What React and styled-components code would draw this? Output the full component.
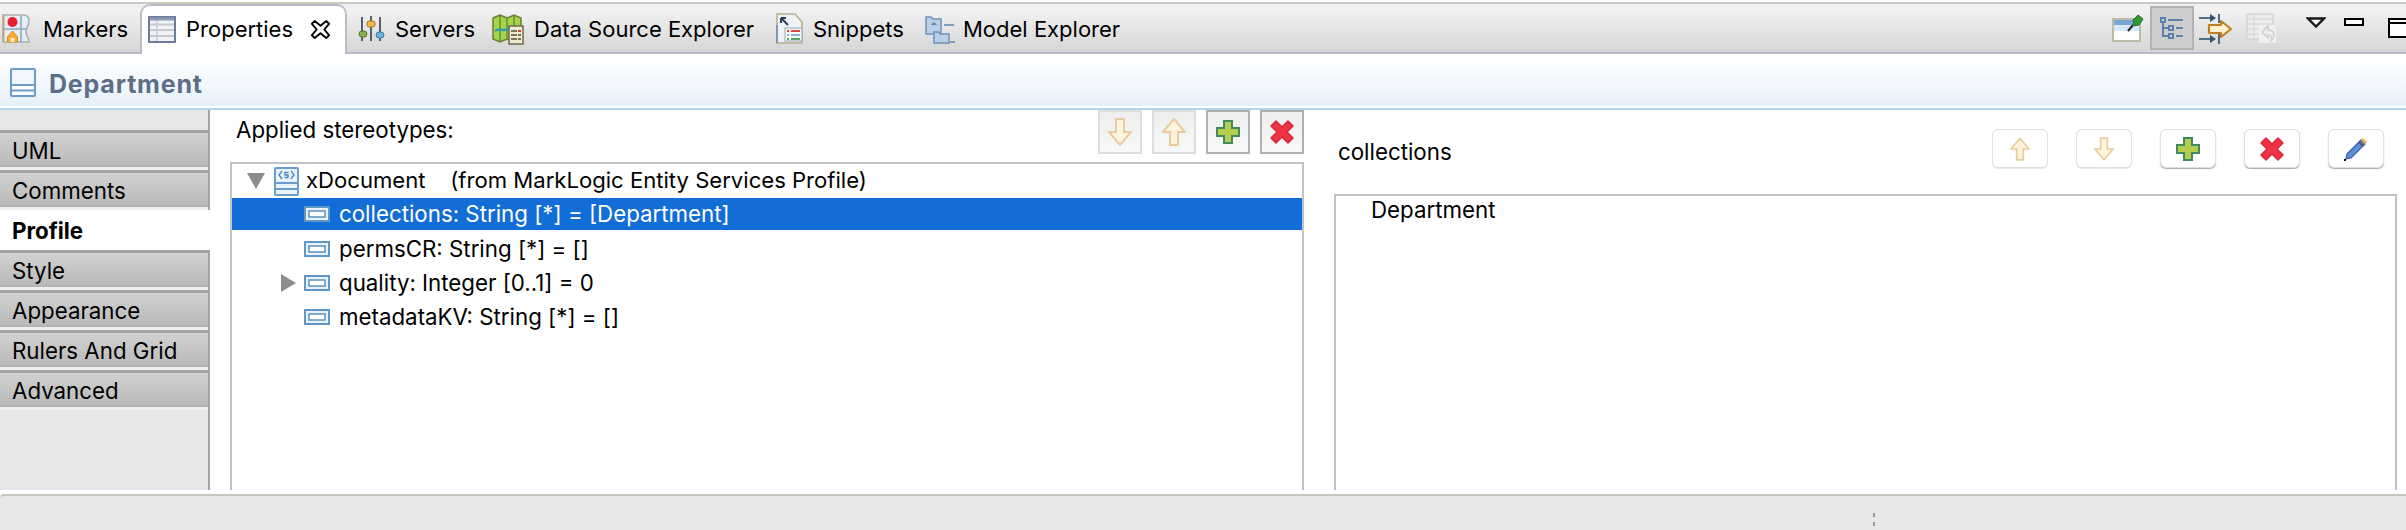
import React from 'react'
import styled, { createGlobalStyle } from 'styled-components'

const Global = createGlobalStyle`
  html, body { margin: 0; padding: 0; background: #fff; }
  body { font-family: "Inter", "Liberation Sans", sans-serif; color: #000; overflow: hidden; }
`

const Page = styled.div`
  width: 2406px;
  height: 530px;
  display: flex;
  flex-direction: column;
  overflow: hidden;
  background: #fff;
`

const TabStrip = styled.div`
  flex: none;
  height: 48px;
  margin-top: 2px;
  display: flex;
  background: linear-gradient(#f1f1f1 6px, #d6d6d6);
  border-top: 2px solid #c9c9c2;
  border-bottom: 2px solid #b9bcc9;
`

const Tab = styled.div`
  flex: none;
  width: ${p => p.$w}px;
  height: 48px;
  box-sizing: border-box;
  display: flex;
  align-items: center;
  gap: ${p => p.$gap || 10}px;
  padding: 1px 0 0 ${p => p.$pad}px;
  font-size: 22px;
  white-space: nowrap;
`

const ActiveTab = styled(Tab)`
  height: 50px;
  background: #fff;
  border: 2px solid #b9bcc9;
  border-bottom: 0;
  border-radius: 10px 10px 0 0;
  padding: 0 0 2px 6px;
  margin-bottom: -2px;
`

const CloseMark = styled.svg`
  width: 21px;
  height: 21px;
  margin-left: 7px;
  flex: none;
`

const ViewTools = styled.div`
  margin-left: auto;
  display: flex;
  align-items: center;
  height: 48px;
`

const ToolIcon = styled.span`
  flex: none;
  display: flex;
  align-items: ${p => (p.$pt ? 'flex-start' : 'center')};
  justify-content: center;
  width: ${p => p.$w}px;
  height: 44px;
  margin-left: ${p => p.$ml || 0}px;
  padding-top: ${p => p.$pt || 0}px;
  box-sizing: border-box;
  background: ${p => (p.$on ? '#cdcdcd' : 'transparent')};
  border: ${p => (p.$on ? '2px solid #b3b3b3' : '0')};
`

const Header = styled.div`
  flex: none;
  height: 52px;
  box-sizing: border-box;
  display: flex;
  align-items: center;
  gap: 13px;
  padding: 5px 0 0 10px;
  background: linear-gradient(#fff 8%, #e6f0f9);
  border-bottom: 2px solid #fff;
  box-sizing: content-box;
  height: 47px;
`

const HeaderRule = styled.div`
  flex: none;
  height: 2px;
  background: #b6d3ee;
`

const HeaderTitle = styled.div`
  font-size: 25px;
  font-weight: 700;
  letter-spacing: 0.8px;
  color: #5d6f86;
  padding-top: 3px;
`

const Body = styled.div`
  flex: none;
  height: 380px;
  display: flex;
`

const Sidebar = styled.div`
  flex: none;
  width: 210px;
  box-sizing: border-box;
  padding-top: 20px;
  background: #e7e7e7;
  border-right: 2px solid #a3a3a3;
`

const SideTab = styled.div`
  height: 40px;
  box-sizing: border-box;
  display: flex;
  align-items: center;
  padding-left: 12px;
  margin-right: ${p => (p.$on ? '-2px' : '0')};
  font-size: 22.3px;
  font-weight: ${p => (p.$on ? 700 : 400)};
  background: ${p => (p.$on ? '#fff' : 'linear-gradient(#d1d1d1, #b9b9b9)')};
  border-top: ${p => (p.$on ? '0' : '3px solid #a3a3a3')};
  border-bottom: ${p => (p.$on ? '0' : '3px solid #f0f0f0')};
  box-shadow: ${p => (p.$on ? 'none' : 'inset 0 -1px 0 #b0b0b0')};
`

const LeftPane = styled.div`
  flex: none;
  width: 1094px;
  box-sizing: border-box;
  display: flex;
  flex-direction: column;
  padding-left: 20px;
`

const PaneBar = styled.div`
  flex: none;
  height: 52px;
  display: flex;
  justify-content: space-between;
`

const PaneLabel = styled.div`
  font-size: 22.3px;
  padding: 6px 0 0 6px;
`

const SquareButtons = styled.div`
  display: flex;
  gap: 10px;
`

const SquareButton = styled.div`
  width: 44px;
  height: 44px;
  box-sizing: border-box;
  display: flex;
  align-items: center;
  justify-content: center;
  background: linear-gradient(#eeeeee, #f8f8f8);
  border: 2px solid ${p => (p.$off ? '#dedede' : '#b0b0b0')};
`

const TreeBox = styled.div`
  flex: 1;
  border: 2px solid #c2c2c2;
  border-bottom: 0;
`

const TreeRow = styled.div`
  height: ${p => (p.$sel ? 32 : 34)}px;
  margin-bottom: ${p => (p.$sel ? 2 : 0)}px;
  display: flex;
  align-items: center;
  font-size: 22.3px;
  white-space: nowrap;
  background: ${p => (p.$sel ? '#126dd6' : 'transparent')};
  color: ${p => (p.$sel ? '#fff' : '#000')};
`

const RowText = styled.span`
  white-space: pre;
  margin-top: -2px;
`

const DocText = styled(RowText)`
  font-size: 22.1px;
  margin-left: -1px;
`

const Twisty = styled.div`
  flex: none;
  width: 0;
  height: 0;
  margin-left: ${p => p.$ml}px;
  border-style: solid;
  border-color: transparent;
  ${p => (p.$open
    ? 'border-width: 16px 9px 0 9px; border-top-color: #8d8d8d;'
    : 'border-width: 9px 0 9px 15px; border-left-color: #8d8d8d;')}
`

const StereotypeSlot = styled.span`
  flex: none;
  margin: 0 8px 0 9px;
`

const RowIcon = styled.svg`
  flex: none;
  width: 26px;
  height: 16px;
  margin-left: ${p => p.$ml}px;
  margin-right: 9px;
`

const RightPane = styled.div`
  flex: 1;
  min-width: 0;
  display: flex;
  flex-direction: column;
  padding: 19px 9px 0 30px;
`

const ValueBar = styled.div`
  flex: none;
  height: 65px;
  display: flex;
  justify-content: space-between;
`

const ValueLabel = styled.div`
  font-size: 22.3px;
  padding: 9px 0 0 4px;
`

const RoundButtons = styled.div`
  display: flex;
  gap: 28px;
  margin-right: 13px;
`

const RoundButton = styled.div`
  width: 56px;
  height: 39px;
  box-sizing: border-box;
  display: flex;
  align-items: center;
  justify-content: center;
  background: #fff;
  border: 1px solid #e0e0e0;
  border-radius: 6px;
  box-shadow: 0 1px 1px ${p => (p.$off ? '#e4e4e4' : '#a8a8a8')};
`

const ValueBox = styled.div`
  flex: 1;
  border: 2px solid #c2c2c2;
  border-bottom: 0;
  padding: 0 0 0 35px;
  font-size: 22.3px;
`

const BottomArea = styled.div`
  flex: 1;
  margin-top: 4px;
  background: #e7e7e7;
  border-top: 2px solid #c5c6bd;
  border-top-left-radius: 4px;
  display: flex;
  justify-content: center;
  padding: 17px 0 0 1342px;
  box-sizing: border-box;
`

const Sash = styled.div`
  width: 2px;
  height: 13px;
  background: linear-gradient(#9c9c94 4px, transparent 4px, transparent 9px, #9c9c94 9px);
`

const IconSvg = styled.svg`
  flex: none;
  display: block;
`

const Svg = ({ w, h, vb, children }) => (
  <IconSvg width={w} height={h} viewBox={vb || `0 0 ${w} ${h}`}>{children}</IconSvg>
)

const MarkersIcon = () => (
  <Svg w={28} h={29}>
    <path d="M1 1h20c5 0 6 3 6 6 0 5-3 7-3 11 0 4 3 6 3 10H1z" fill="#e6edf4" stroke="#a9afb2" strokeWidth="1.500" />
    <path d="M1.500 1.500v26" stroke="#b9a77e" strokeWidth="2" />
    <path d="M2 15h22M19 2v26" stroke="#8fa6c0" strokeWidth="1.500" />
    <circle cx="10.500" cy="8" r="5" fill="#e3202c" />
    <path d="M10.500 17l5 6v5h-10v-5z" fill="#f8ae2c" stroke="#d98e22" />
    <path d="M8.500 24h4v4h-4z" fill="#fde9b8" />
  </Svg>
)

const PropertiesIcon = () => (
  <Svg w={28} h={27}>
    <rect x="1" y="1" width="26" height="25" fill="#f2f2f4" stroke="#6d7c97" strokeWidth="2" />
    <path d="M2 8.500h24M2 14h24M2 20h24" stroke="#c4c9d2" strokeWidth="2" />
    <path d="M9 3v22" stroke="#c9ced6" strokeWidth="1.500" />
    <path d="M2 3h24" stroke="#8c99b0" strokeWidth="3" />
  </Svg>
)

const ServersIcon = () => (
  <Svg w={27} h={28}>
    <path d="M4 2v24M13 1v25M22 2v24" stroke="#55606e" strokeWidth="2" />
    <rect x="1" y="16" width="8" height="6" rx="3" fill="#86b04a" stroke="#4e7a2d" />
    <rect x="9" y="6" width="8" height="6" rx="2" fill="#efb84a" stroke="#ad7a1e" />
    <rect x="18" y="17" width="8" height="6" rx="3" fill="#6fb4dc" stroke="#3a7ca6" />
  </Svg>
)

const DataSourceIcon = () => (
  <Svg w={32} h={32}>
    <path d="M1 5l7-3 7 3 7-3 7 3v20l-7 4-7-3-7 3-7-3z" fill="#a4d64a" stroke="#707a3a" strokeWidth="1.500" />
    <path d="M8 3v25M15 5v22M22 3v25" stroke="#6c8c34" strokeWidth="1.500" />
    <path d="M3 18c5-4 9 2 15-3" stroke="#3a9aa8" strokeWidth="2.500" fill="none" />
    <rect x="17" y="13" width="14" height="18" fill="#efe9cf" stroke="#6f6a50" strokeWidth="1.500" />
    <path d="M19 18h6M19 22h6M19 26h6" stroke="#77735c" strokeWidth="2" />
    <path d="M26 18h3" stroke="#cf3a2c" strokeWidth="2" />
    <path d="M26 22h3M26 26h3" stroke="#77735c" strokeWidth="2" />
  </Svg>
)

const SnippetsIcon = () => (
  <Svg w={27} h={31}>
    <path d="M1 1h18l7 8v21H1z" fill="#eef3f8" stroke="#b8ad8c" strokeWidth="1.500" />
    <path d="M5 5l7 7M5 5h5M5 5v5" stroke="#2a3c56" strokeWidth="2" fill="none" />
    <rect x="9" y="15" width="17" height="13" fill="#f8f8f4" stroke="#9aa4b4" />
    <path d="M11 18h2M15 18h9" stroke="#d84840" strokeWidth="2" />
    <path d="M11 22h2M15 22h9" stroke="#8ab2d6" strokeWidth="2" />
    <path d="M11 26h2M15 26h9" stroke="#4ea860" strokeWidth="2" />
    <path d="M1 12v18" stroke="#7f96b6" strokeWidth="2" />
  </Svg>
)

const ModelIcon = () => (
  <Svg w={30} h={30}>
    <path d="M1 3h5l2 2h8v15H1z" fill="#b8cfe6" stroke="#6f92b8" strokeWidth="1.500" />
    <path d="M6 11l3-3 3 3z" fill="#5f84a8" />
    <path d="M9 18h5l1 2h9v9H9z" fill="#b8cfe6" stroke="#6f92b8" strokeWidth="1.500" />
    <path d="M19 11h10M25 28h5" stroke="#7d9cc0" strokeWidth="2" />
  </Svg>
)

const PinIcon = () => (
  <Svg w={32} h={28}>
    <rect x="1" y="5" width="27" height="22" fill="#fff" stroke="#aca88c" strokeWidth="1.500" />
    <rect x="2" y="6" width="25" height="5" fill="#7aa6d6" />
    <path d="M2 11h25v6H2z" fill="#d6e8f8" />
    <path d="M16 17l5-6" stroke="#222" strokeWidth="2" />
    <path d="M21 6l5-5 5 4-4 6-5 1z" fill="#2f9a3c" stroke="#1f6f2a" />
  </Svg>
)

const TreeModeIcon = () => (
  <Svg w={24} h={22}>
    <g fill="#cdd6e6" stroke="#5f7fae" strokeWidth="2">
      <rect x="1" y="1" width="4" height="4" />
      <rect x="9" y="9" width="4" height="4" />
      <rect x="9" y="17" width="4" height="4" />
    </g>
    <path d="M3 5v14h6M3 11h6M8 3h15M16 11h7M16 19h7" stroke="#5f7fae" strokeWidth="2" fill="none" />
  </Svg>
)

const SyncIcon = () => (
  <Svg w={34} h={31}>
    <path d="M0 5h11M0 26h11" stroke="#4d7186" strokeWidth="2" />
    <path d="M11 1l6 4-6 4zM11 22l6 4-6 4z" fill="#33546c" />
    <path d="M20 1v9M20 21v10" stroke="#4d7186" strokeWidth="2" />
    <path d="M10 12h12V8l10 8-10 8v-4H10z" fill="#fff3cf" stroke="#c07f26" strokeWidth="2.200" strokeLinejoin="round" />
  </Svg>
)

const RevertIcon = () => (
  <Svg w={30} h={30}>
    <rect x="1" y="1" width="26" height="25" fill="#ececec" stroke="#d4d4d4" strokeWidth="1.500" />
    <path d="M2 6h24M2 11h24M2 16h24M2 21h24M8 2v24" stroke="#dadada" strokeWidth="1.500" />
    <rect x="13" y="12" width="17" height="18" fill="#f0f0f0" />
    <path d="M16 19l6-6v4c5 0 6 3 6 5s-1 4-3 6c1-5-1-6-3-6v3z" fill="#ededed" stroke="#cfcfcf" strokeWidth="1.500" />
  </Svg>
)

const ViewMenuIcon = () => (
  <Svg w={20} h={11}>
    <path d="M2 1.500h16L10 9.500z" fill="#f4f4f4" stroke="#1a1a1a" strokeWidth="2.400" />
  </Svg>
)

const MinimizeIcon = () => (
  <Svg w={20} h={8}>
    <rect x="1" y="1" width="18" height="6" fill="#fff" stroke="#000" strokeWidth="2" />
  </Svg>
)

const MaximizeIcon = () => (
  <Svg w={18} h={20}>
    <rect x="1" y="1" width="24" height="18" fill="#fff" stroke="#000" strokeWidth="2" />
    <path d="M1 5h24" stroke="#000" strokeWidth="2" />
  </Svg>
)

const DepartmentIcon = () => (
  <Svg w={26} h={29}>
    <rect x="1" y="1" width="24" height="27" rx="1" fill="#fff" stroke="#6a9ccd" strokeWidth="2" />
    <path d="M2 17h22M2 22.500h22" stroke="#6a9ccd" strokeWidth="2" />
    <rect x="2" y="2" width="22" height="14" fill="#f0f6fc" />
  </Svg>
)

const StereotypeIcon = () => (
  <Svg w={25} h={29}>
    <rect x="1" y="1" width="23" height="27" rx="1" fill="#eaf3fb" stroke="#6a9ccd" strokeWidth="2" />
    <path d="M2 16h21M2 22h21" stroke="#6a9ccd" strokeWidth="2" />
    <path d="M8 4L5 8l3 4M17 4l3 4-3 4M14.500 5.500h-3.500v2.500h3v2.500h-3.500" stroke="#4f86bc" strokeWidth="1.300" fill="none" />
  </Svg>
)

const AttributeIcon = ({ ml }) => (
  <RowIcon $ml={ml} viewBox="0 0 26 16">
    <rect x="1" y="1" width="24" height="14" fill="#e9f2fa" stroke="#5f97c9" strokeWidth="2" />
    <rect x="5" y="5" width="16" height="6" fill="#fff" stroke="#5f8fba" strokeWidth="1.500" />
  </RowIcon>
)

const ArrowDown = ({ w = 24 }) => (
  <Svg w={w} h={w + 4} vb="0 0 24 28">
    <path d="M8 1h8v13h7L12 27 1 14h7z" fill="#fdf3dc" stroke="#e8cc9c" strokeWidth="2" strokeLinejoin="round" />
  </Svg>
)

const ArrowUp = ({ w = 24 }) => (
  <Svg w={w} h={w + 4} vb="0 0 24 28">
    <path d="M8 27h8V14h7L12 1 1 14h7z" fill="#fdf3dc" stroke="#e8cc9c" strokeWidth="2" strokeLinejoin="round" />
  </Svg>
)

const PlusIcon = () => (
  <Svg w={24} h={24}>
    <path d="M8 1h8v7h7v8h-7v7H8v-7H1V8h7z" fill="#b6cc4e" stroke="#3f8a5c" strokeWidth="2" />
  </Svg>
)

const CrossIcon = () => (
  <Svg w={24} h={24}>
    <path d="M6 1l6 6 6-6 5 5-6 6 6 6-5 5-6-6-6 6-5-5 6-6-6-6z" fill="#ee3344" stroke="#d62a3c" strokeWidth="1.500" strokeLinejoin="round" />
  </Svg>
)

const PencilIcon = () => (
  <Svg w={24} h={24}>
    <path d="M3 17L17 3l4 4L7 21l-5 1z" fill="#5f8fdc" stroke="#3a62a8" strokeWidth="1.300" />
    <path d="M17 3l2-2 4 4-2 2z" fill="#f4b04a" />
    <path d="M15 5l4 4" stroke="#555" strokeWidth="2" />
    <rect x="0" y="22" width="2" height="2" fill="#000" />
  </Svg>
)

export default function App() {
  return (
    <Page>
      <Global />
      <TabStrip>
        <Tab $w={140} $pad={2} $gap={13}><MarkersIcon />Markers</Tab>
        <ActiveTab $w={207} $gap={10}>
          <PropertiesIcon />Properties
          <CloseMark viewBox="0 0 22 22">
            <path d="M5 2l6 5 6-5 3 3-5 6 5 6-3 3-6-5-6 5-3-3 5-6-5-6z" fill="#fff" stroke="#000" strokeWidth="2" strokeLinejoin="round" />
          </CloseMark>
        </ActiveTab>
        <Tab $w={137} $pad={11}><ServersIcon />Servers</Tab>
        <Tab $w={284} $pad={8}><DataSourceIcon />Data Source Explorer</Tab>
        <Tab $w={149} $pad={8}><SnippetsIcon />Snippets</Tab>
        <Tab $w={200} $pad={8} $gap={8}><ModelIcon />Model Explorer</Tab>
        <ViewTools>
          <PinIcon />
          <ToolIcon $w={44} $ml={6} $on><TreeModeIcon /></ToolIcon>
          <ToolIcon $w={34} $ml={5}><SyncIcon /></ToolIcon>
          <ToolIcon $w={30} $ml={13}><RevertIcon /></ToolIcon>
          <ToolIcon $w={20} $ml={30} $pt={11}><ViewMenuIcon /></ToolIcon>
          <ToolIcon $w={20} $ml={18} $pt={12}><MinimizeIcon /></ToolIcon>
          <ToolIcon $w={18} $ml={24} $pt={12}><MaximizeIcon /></ToolIcon>
        </ViewTools>
      </TabStrip>
      <Header>
        <DepartmentIcon />
        <HeaderTitle>Department</HeaderTitle>
      </Header>
      <HeaderRule />
      <Body>
        <Sidebar>
          <SideTab>UML</SideTab>
          <SideTab>Comments</SideTab>
          <SideTab $on>Profile</SideTab>
          <SideTab>Style</SideTab>
          <SideTab>Appearance</SideTab>
          <SideTab>Rulers And Grid</SideTab>
          <SideTab>Advanced</SideTab>
        </Sidebar>
        <LeftPane>
          <PaneBar>
            <PaneLabel>Applied stereotypes:</PaneLabel>
            <SquareButtons>
              <SquareButton $off><ArrowDown /></SquareButton>
              <SquareButton $off><ArrowUp /></SquareButton>
              <SquareButton><PlusIcon /></SquareButton>
              <SquareButton><CrossIcon /></SquareButton>
            </SquareButtons>
          </PaneBar>
          <TreeBox>
            <TreeRow>
              <Twisty $open $ml={15} />
              <StereotypeSlot><StereotypeIcon /></StereotypeSlot>
              <DocText>xDocument    (from MarkLogic Entity Services Profile)</DocText>
            </TreeRow>
            <TreeRow $sel><AttributeIcon ml={72} /><RowText>collections: String [*] = [Department]</RowText></TreeRow>
            <TreeRow><AttributeIcon ml={72} /><RowText>permsCR: String [*] = []</RowText></TreeRow>
            <TreeRow><Twisty $ml={49} /><AttributeIcon ml={8} /><RowText>quality: Integer [0..1] = 0</RowText></TreeRow>
            <TreeRow><AttributeIcon ml={72} /><RowText>metadataKV: String [*] = []</RowText></TreeRow>
          </TreeBox>
        </LeftPane>
        <RightPane>
          <ValueBar>
            <ValueLabel>collections</ValueLabel>
            <RoundButtons>
              <RoundButton $off><ArrowUp w={20} /></RoundButton>
              <RoundButton $off><ArrowDown w={20} /></RoundButton>
              <RoundButton><PlusIcon /></RoundButton>
              <RoundButton><CrossIcon /></RoundButton>
              <RoundButton><PencilIcon /></RoundButton>
            </RoundButtons>
          </ValueBar>
          <ValueBox>Department</ValueBox>
        </RightPane>
      </Body>
      <BottomArea><Sash /></BottomArea>
    </Page>
  )
}
